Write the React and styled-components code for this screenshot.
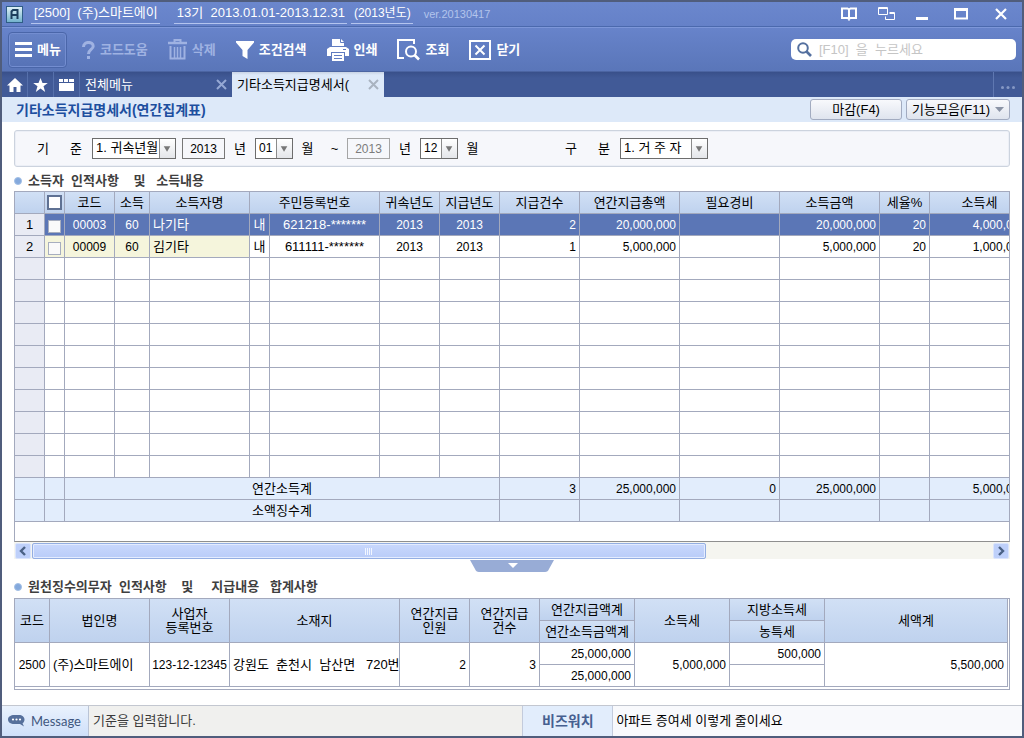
import React from "react";
import styled, { createGlobalStyle, css } from "styled-components";

const LINE = "#a3a9bd";
const HEAD_BG = "linear-gradient(#d1e0f5, #bfd2ee)";

const GlobalStyle = createGlobalStyle`
  *, *::before, *::after { box-sizing: border-box; }
  body { margin: 0; }
  body, button, input, select {
    font-family: "Liberation Sans", "Noto Sans CJK KR", sans-serif;
    font-size: 13px;
    line-height: 16px;
    color: #000;
  }
  button, input, select { margin: 0; padding: 0; border: 0; border-radius: 0; background: none; }
  button { cursor: pointer; }
`;

const Frame = styled.div`
  display: flex;
  flex-direction: column;
  min-height: 100vh;
  border: 2px solid #505d7c;
  background: #fff;
`;

const TitleBar = styled.header`
  display: flex;
  align-items: center;
  height: 25px;
  padding: 0 13px 0 4px;
  color: #fff;
  background: linear-gradient(#6b87cd, #6581c8);
  border-bottom: 1px solid #4b69ad;
  white-space: pre;
`;

const Underlined = styled.span`
  height: 20px;
  padding: 1px 2px 0 3px;
  margin-left: ${(p) => p.$gap}px;
  border-bottom: 1px solid #b4c4ee;
  font-size: ${(p) => (p.$small ? 12 : 13)}px;
`;

const Version = styled.span`
  margin-left: 11px;
  font-size: 11px;
  color: #b3c4ec;
`;

const WindowButtons = styled.div`
  display: flex;
  gap: 21px;
  margin-left: auto;
  button { display: flex; }
`;

const Toolbar = styled.div`
  display: flex;
  align-items: center;
  height: 45px;
  padding: 0 6px;
  background: linear-gradient(#6783ca, #5a76b9);
  border-top: 1px solid #7d97d9;
  border-bottom: 1px solid #4c65a2;
`;

const MenuButton = styled.button`
  display: flex;
  align-items: center;
  gap: 5px;
  height: 36px;
  padding: 0 5px 0 6px;
  color: #fff;
  font-weight: 700;
  border: 1px solid #4a66a9;
  border-radius: 4px;
  background: linear-gradient(#6682c6, #5672b6);
  box-shadow: inset 0 0 0 1px #738dd0;
`;

const Tools = styled.nav`
  display: flex;
  gap: 20px;
  margin-left: 15px;
`;

const ToolButton = styled.button`
  display: flex;
  align-items: center;
  gap: 5px;
  height: 30px;
  font-weight: 700;
  white-space: nowrap;
  color: ${(p) => (p.$muted ? "#9fb2e2" : "#fff")};
`;

const SearchBox = styled.label`
  display: flex;
  align-items: center;
  gap: 7px;
  width: 225px;
  height: 21px;
  margin-left: auto;
  padding: 0 6px;
  border-radius: 5px;
  background: #fff;
  input { flex: 1; min-width: 0; outline: 0; }
  input::placeholder { color: #c5c5c5; opacity: 1; }
`;

const TabBar = styled.div`
  display: flex;
  height: 25px;
  background: linear-gradient(#39508a, #415a97 6px);
`;

const TabIcon = styled.button`
  display: flex;
  align-items: center;
  justify-content: center;
  width: 26px;
  border-right: 1px solid #5670ab;
`;

const Tab = styled.div`
  display: flex;
  align-items: center;
  justify-content: space-between;
  width: 152px;
  padding: 0 5px;
  white-space: nowrap;
  color: ${(p) => (p.$active ? "#000" : "#fff")};
  background: ${(p) => (p.$active ? "linear-gradient(#c8d3e4, #dde9f9 3px)" : "none")};
  button { display: flex; color: ${(p) => (p.$active ? "#a9b3c0" : "#95a8d4")}; }
`;

const TabText = styled.button`
  && { color: inherit; }
`;

const MoreButton = styled.button`
  display: flex;
  align-items: center;
  justify-content: center;
  width: 29px;
  margin-left: auto;
  padding-top: 5px;
  border-left: 1px solid #5f78b1;
`;

const PageHead = styled.div`
  display: flex;
  align-items: center;
  gap: 4px;
  height: 25px;
  padding: 0 12px 0 14px;
  background: #dde9f9;
`;

const PageTitle = styled.h1`
  margin: 0 auto 0 0;
  font-size: 14px;
  line-height: 20px;
  color: #1d4f9f;
`;

const HeadButton = styled.button`
  display: flex;
  align-items: center;
  justify-content: center;
  gap: 5px;
  min-width: 92px;
  height: 21px;
  padding: 0 5px;
  border: 1px solid #a2abc0;
  border-radius: 3px;
  background: linear-gradient(#f8f9fc, #dfe4ee);
`;

const Main = styled.main`
  padding: 8px 12px 15px;
`;

const Filter = styled.form`
  display: flex;
  align-items: center;
  height: 37px;
  padding-left: 22px;
  border: 1px solid #ccd3de;
  border-radius: 3px;
  background: #f6f7fb;
  box-shadow: inset 0 0 0 1px #eceff6;
`;

const Caption = styled.label`
  display: flex;
  justify-content: space-between;
  width: 45px;
  margin-right: 10px;
  margin-left: ${(p) => p.$gap || 0}px;
`;

const Unit = styled.span`
  width: ${(p) => p.$w}px;
  text-align: center;
`;

const YearInput = styled.input`
  width: 43px;
  height: 21px;
  text-align: center;
  font-size: 12px;
  border: 1px solid #777;
  background: #f6f7fb;
  &:disabled { color: #7c7c7c; border-color: #a5a5a5; }
`;

const SelectBox = styled.span`
  position: relative;
  width: ${(p) => p.$w}px;
  height: 21px;
  border: 1px solid #6d6d6d;
  background: #fff;
  select {
    appearance: none;
    width: 100%;
    height: 19px;
    padding: 0 16px 2px 3px;
    font-size: ${(p) => (p.$small ? 12 : 13)}px;
    outline: 0;
  }
  svg {
    position: absolute;
    top: 0;
    right: 0;
    width: 16px;
    height: 19px;
    border-left: 1px solid #8b8b8b;
    background: linear-gradient(#fff, #e4e6ea);
    pointer-events: none;
  }
`;

const SectionTitle = styled.h2`
  display: flex;
  align-items: center;
  gap: 6px;
  height: ${(p) => p.$h}px;
  margin: 0;
  padding-top: 4px;
  font-size: 13px;
  line-height: 16px;
  color: #3f3f3f;
  white-space: pre;
  &::before {
    content: "";
    width: 8px;
    height: 8px;
    border-radius: 50%;
    background: #84a9dc;
    border: 1px solid #a3c0e6;
  }
`;

const GridBox = styled.div`
  overflow: hidden;
  padding-bottom: 19px;
  border: 1px solid ${LINE};
  border-bottom-color: #8f8f8f;
`;

const tableBase = css`
  table-layout: fixed;
  border-collapse: separate;
  border-spacing: 0;
  th, td {
    height: 22px;
    padding: 0 3px;
    border: 0 solid ${LINE};
    border-width: 0 1px 1px 0;
    font-weight: 400;
    line-height: 14px;
    white-space: pre;
    overflow: hidden;
  }
  thead th { padding: 0; background: ${HEAD_BG}; }
`;

const Grid = styled.table`
  ${tableBase}
  width: 1015px;
  tbody th { background: #e9ebf4; }
  tfoot td { background: #e2edfc; }
`;

const Row = styled.tr`
  td { color: ${(p) => (p.$selected ? "#fff" : "#000")}; background: ${(p) => (p.$selected ? "#5b76b6" : "#fff")}; }
  td:nth-child(-n + 5) { ${(p) => p.$tinted && "background: #f5f5dc;"} }
`;

const Cell = styled.td`
  text-align: ${(p) => p.$align || "left"};
  font-size: ${(p) => (p.$num ? 12 : 13)}px;
  && { ${(p) => p.$tight && "padding: 0;"} }
`;

const Check = styled.input`
  appearance: none;
  display: block;
  width: ${(p) => (p.$head ? 15 : 13)}px;
  height: ${(p) => (p.$head ? 15 : 13)}px;
  margin: ${(p) => (p.$head ? "0 auto" : "3px auto 0")};
  border: ${(p) => (p.$head ? "2px solid #5f7193" : "1px solid #a7aebf")};
  background: ${(p) => (p.$head ? "#fff" : "#fafafa")};
`;

const ScrollBar = styled.div`
  display: flex;
  gap: 1px;
  height: 17px;
  padding: 1px 1px 0;
  background: #f5f5f0;
`;

const ScrollArrow = styled.button`
  display: flex;
  align-items: center;
  justify-content: center;
  width: 16px;
  border: 1px solid #dbe5fd;
  border-radius: 2px;
  background: #bed0fa;
`;

const ScrollThumb = styled.div`
  display: flex;
  align-items: center;
  justify-content: center;
  flex: 674;
  border: 1px solid #94aee2;
  border-radius: 2px;
  background: linear-gradient(#c9d8fd, #b9ccf8);
  box-shadow: inset 0 0 0 1px #e4ecff;
`;

const ScrollRest = styled.div`
  flex: 286;
`;

const Fold = styled.button`
  display: block;
  height: 12px;
  margin: 1px auto 0;
  svg { display: block; }
`;

const SummaryBox = styled.div`
  padding: 0 1px 2px 0;
  border: 1px solid ${LINE};
`;

const Summary = styled.table`
  ${tableBase}
  width: 100%;
`;

const Status = styled.footer`
  display: flex;
  height: 31px;
  margin-top: auto;
  line-height: 30px;
  white-space: nowrap;
  border-top: 1px solid #c3c7d0;
`;

const StatusTag = styled.div`
  display: flex;
  align-items: center;
  gap: 6px;
  width: 87px;
  padding-left: 6px;
  font-family: Lato, sans-serif;
  font-size: 13px;
  color: #40577f;
  background: linear-gradient(#eaf2fd, #cfe0fa);
  border-right: 1px solid #bac4d6;
`;

const StatusText = styled.div`
  flex: 434;
  padding-left: 4px;
  color: #3a3a3a;
  background: #f0f0ee;
`;

const BizTag = styled.div`
  width: 91px;
  text-align: center;
  font-size: 14px;
  font-weight: 700;
  color: #465f90;
  background: #e2edfc;
  border: 0 solid #c3cbdc;
  border-width: 0 1px;
`;

const BizText = styled.a`
  flex: 410;
  padding-left: 3px;
  color: #000;
  text-decoration: none;
  background: #f8f9fc;
`;

const Close = () => (
  <svg width="11" height="11" viewBox="0 0 11 11" fill="none" stroke="currentColor" strokeWidth="2">
    <path d="M1 1l9 9M10 1l-9 9" />
  </svg>
);

const Select = ({ id, label, w, options, small }) => (
  <SelectBox $w={w} $small={small}>
    <select id={id} aria-label={label}>
      {options.map((o) => <option key={o}>{o}</option>)}
    </select>
    <svg viewBox="0 0 16 19"><path d="M4 7h7l-3.5 6z" fill="#777" /></svg>
  </SelectBox>
);

const GRID_COLS = [30, 20, 50, 35, 100, 20, 110, 60, 60, 80, 100, 100, 100, 50, 100];
const ROWS = [
  { code: "00003", name: "나기타", id: "621218-*******", count: "2", total: "20,000,000", income: "20,000,000", tax: "4,000,000", selected: true },
  { code: "00009", name: "김기타", id: "611111-*******", count: "1", total: "5,000,000", income: "5,000,000", tax: "1,000,000" },
];
const EMPTY_ROWS = 10;
const SUMMARY_COLS = [35, 100, 80, 170, 70, 70, 95, 95, 95];

export default function App() {
  return (
    <Frame>
      <GlobalStyle />
      <TitleBar>
        <svg width="17" height="17" viewBox="0 0 17 17">
          <defs>
            <linearGradient id="logo" x2="0" y2="1"><stop stopColor="#e2f3f8" /><stop offset="1" stopColor="#6fb0cb" /></linearGradient>
          </defs>
          <rect x=".5" y=".5" width="16" height="16" fill="url(#logo)" stroke="#2f5d86" />
          <path d="M5.500 13V5.500L7 4h4.500v9M5.500 9h6" fill="none" stroke="#1c3d5c" strokeWidth="2" />
        </svg>
        <Underlined $gap={8}>{"[2500]  (주)스마트에이"}</Underlined>
        <Underlined $gap={14}>{"13기  2013.01.01-2013.12.31"}</Underlined>
        <Underlined $gap={4} $small>(2013년도)</Underlined>
        <Version>ver.20130417</Version>
        <WindowButtons>
          <button aria-label="도움말">
            <svg width="17" height="14" fill="none" stroke="#fff" strokeWidth="2"><path d="M9 2.500L7.500 1.500H2v9.500h5.500L9 12l1.500-1H16V1.500h-5.500zV13.500" /></svg>
          </button>
          <button aria-label="창 전환">
            <svg width="17" height="14" fill="none" stroke="#fff"><path d="M.5 .5h9v7h-9zM.5 1.500h9M11.500 5.500h5v7h-9V9.500M11.500 6.500h5" /></svg>
          </button>
          <button aria-label="최소화">
            <svg width="17" height="14"><path d="M0 10h12v3H0z" fill="#fff" /></svg>
          </button>
          <button aria-label="최대화">
            <svg width="17" height="14" fill="none" stroke="#fff"><path d="M1 2v9.500h12V2z" strokeWidth="2" /><path d="M0 2.500h14" strokeWidth="3" /></svg>
          </button>
          <button aria-label="창 닫기">
            <svg width="17" height="14" stroke="#fff" strokeWidth="2.200"><path d="M4 2l10 10M14 2L4 12" /></svg>
          </button>
        </WindowButtons>
      </TitleBar>

      <Toolbar>
        <MenuButton>
          <svg width="17" height="15" fill="#fff"><path d="M0 0h17v3H0zM0 6h17v3H0zM0 12h17v3H0z" /></svg>
          메뉴
        </MenuButton>
        <Tools>
          <ToolButton $muted>
            <svg width="13" height="18" viewBox="0 0 13 18" fill="none" stroke="currentColor" strokeWidth="3">
              <path d="M1.500 6C1.500 0 11.200 0 11.200 5.200c0 3.300-4.700 3.300-4.700 7.800" /><path d="M6.500 15v3" />
            </svg>
            코드도움
          </ToolButton>
          <ToolButton $muted>
            <svg width="19" height="21" viewBox="0 0 19 21" fill="none" stroke="currentColor">
              <path d="M0 4h19" strokeWidth="2.500" /><path d="M6.500 3V1h6v2M2.500 7v12.500h14V7" strokeWidth="2" />
              <path d="M6.500 8v11M9.500 8v11M12.500 8v11" strokeWidth="1.500" />
            </svg>
            삭제
          </ToolButton>
          <ToolButton>
            <svg width="18" height="18" fill="#fff"><path d="M0 0h18v1.500L11.500 9v9L6.500 15V9L0 1.500z" /></svg>
            조건검색
          </ToolButton>
          <ToolButton>
            <svg width="22" height="22" fill="#fff">
              <path d="M5 0h9l3 3v4H5z" /><path d="M3 8h16l3 2v7h-4v-4H4v4H0v-7z" /><path d="M5 14h12v8H5z" />
              <path d="M7 16.500h8M7 19.500h8" stroke="#617dc2" /><path d="M13.500 0v3.500H17M16 10.500h3" fill="none" stroke="#617dc2" />
            </svg>
            인쇄
          </ToolButton>
          <ToolButton>
            <svg width="23" height="22" fill="none" stroke="#fff">
              <path d="M17 5V1H1v18h6" strokeWidth="2" /><circle cx="14" cy="12.500" r="5" strokeWidth="2" /><path d="M17.500 16l4.500 4.500" strokeWidth="2.600" />
            </svg>
            조회
          </ToolButton>
          <ToolButton>
            <svg width="22" height="20" fill="none" stroke="#fff" strokeWidth="2"><path d="M1 1h20v18H1zM6.500 5.500l9 9M15.500 5.500l-9 9" /></svg>
            닫기
          </ToolButton>
        </Tools>
        <SearchBox>
          <svg width="15" height="15" fill="none" stroke="#54709f"><circle cx="6" cy="6" r="4.800" strokeWidth="2" /><path d="M9.500 9.500l4.500 4.500" strokeWidth="2.600" /></svg>
          <input type="text" aria-label="검색" placeholder="[F10]  을  누르세요" />
        </SearchBox>
      </Toolbar>

      <TabBar>
        <TabIcon aria-label="홈"><svg width="16" height="14" fill="#fff"><path d="M8 0l8 7.500h-2.500V14H9.500V9h-3v5H2.500V7.500H0z" /></svg></TabIcon>
        <TabIcon aria-label="즐겨찾기"><svg width="15" height="14" fill="#fff"><path d="M7.500 0l2 5h5.300l-4.300 3.300L12.200 14l-4.700-3.400L2.800 14l1.700-5.700L.2 5h5.300z" /></svg></TabIcon>
        <TabIcon aria-label="보관함"><svg width="15" height="13" fill="#fff"><path d="M0 1h4v3H0zM5 1h4v3H5zM10 1h5v3h-5zM0 5h15v8H0z" /></svg></TabIcon>
        <Tab>
          <TabText>전체메뉴</TabText>
          <button aria-label="전체메뉴 탭 닫기"><Close /></button>
        </Tab>
        <Tab $active>
          <TabText>기타소득지급명세서(</TabText>
          <button aria-label="현재 탭 닫기"><Close /></button>
        </Tab>
        <MoreButton aria-label="더보기">
          <svg width="14" height="3" fill="#8598c4"><circle cx="1.500" cy="1.500" r="1.500" /><circle cx="7" cy="1.500" r="1.500" /><circle cx="12.500" cy="1.500" r="1.500" /></svg>
        </MoreButton>
      </TabBar>

      <PageHead>
        <PageTitle>기타소득지급명세서(연간집계표)</PageTitle>
        <HeadButton>마감(F4)</HeadButton>
        <HeadButton>
          기능모음(F11)
          <svg width="9" height="5" fill="#8a93a5"><path d="M0 0h9L4.500 5z" /></svg>
        </HeadButton>
      </PageHead>

      <Main>
        <Filter>
          <Caption htmlFor="basis"><span>기</span><span>준</span></Caption>
          <Select id="basis" w={84} options={["1. 귀속년월"]} />
          <Unit $w={6} />
          <YearInput type="text" aria-label="시작 년도" defaultValue="2013" />
          <Unit $w={30}>년</Unit>
          <Select label="시작 월" w={38} options={["01"]} small />
          <Unit $w={29}>월</Unit>
          <Unit $w={25}>~</Unit>
          <YearInput type="text" aria-label="종료 년도" defaultValue="2013" disabled />
          <Unit $w={30}>년</Unit>
          <Select label="종료 월" w={38} options={["12"]} small />
          <Unit $w={29}>월</Unit>
          <Caption htmlFor="kind" $gap={78}><span>구</span><span>분</span></Caption>
          <Select id="kind" w={88} options={["1. 거 주 자"]} />
        </Filter>

        <SectionTitle $h={24}>{"소득자  인적사항    및   소득내용"}</SectionTitle>
        <GridBox>
          <Grid>
            <colgroup>{GRID_COLS.map((w, i) => <col key={i} style={{ width: w }} />)}</colgroup>
            <thead>
              <tr>
                <th />
                <th><Check type="checkbox" $head aria-label="전체 선택" /></th>
                <th>코드</th><th>소득</th><th>소득자명</th>
                <th colSpan={2}>주민등록번호</th>
                <th>귀속년도</th><th>지급년도</th><th>지급건수</th><th>연간지급총액</th>
                <th>필요경비</th><th>소득금액</th><th>세율%</th><th>소득세</th>
              </tr>
            </thead>
            <tbody>
              {ROWS.map((r, i) => (
                <Row key={r.code} $selected={r.selected} $tinted={!r.selected}>
                  <th>{i + 1}</th>
                  <Cell $tight><Check type="checkbox" aria-label={`${r.name} 선택`} /></Cell>
                  <Cell $align="center" $num>{r.code}</Cell>
                  <Cell $align="center" $num>60</Cell>
                  <Cell>{r.name}</Cell>
                  <Cell $align="center" $tight>내</Cell>
                  <Cell $align="center">{r.id}</Cell>
                  <Cell $align="center" $num>2013</Cell>
                  <Cell $align="center" $num>2013</Cell>
                  <Cell $align="right" $num>{r.count}</Cell>
                  <Cell $align="right" $num>{r.total}</Cell>
                  <Cell />
                  <Cell $align="right" $num>{r.income}</Cell>
                  <Cell $align="right" $num>20</Cell>
                  <Cell $align="right" $num>{r.tax}</Cell>
                </Row>
              ))}
              {Array.from({ length: EMPTY_ROWS }, (_, i) => (
                <Row key={i}>
                  <th />
                  {GRID_COLS.slice(1).map((_, j) => <Cell key={j} />)}
                </Row>
              ))}
            </tbody>
            <tfoot>
              <tr>
                <Cell /><Cell />
                <Cell colSpan={7} $align="center">연간소득계</Cell>
                <Cell $align="right" $num>3</Cell>
                <Cell $align="right" $num>25,000,000</Cell>
                <Cell $align="right" $num>0</Cell>
                <Cell $align="right" $num>25,000,000</Cell>
                <Cell />
                <Cell $align="right" $num>5,000,000</Cell>
              </tr>
              <tr>
                <Cell /><Cell />
                <Cell colSpan={7} $align="center">소액징수계</Cell>
                <Cell /><Cell /><Cell /><Cell /><Cell /><Cell />
              </tr>
            </tfoot>
          </Grid>
        </GridBox>
        <ScrollBar>
          <ScrollArrow type="button" aria-label="왼쪽으로"><svg width="8" height="10" fill="none" stroke="#4a6185" strokeWidth="2.400"><path d="M6 1L2 5l4 4" /></svg></ScrollArrow>
          <ScrollThumb><svg width="8" height="7" stroke="#f2f6ff"><path d="M.5 0v7M2.500 0v7M4.500 0v7M6.500 0v7" /></svg></ScrollThumb>
          <ScrollRest />
          <ScrollArrow type="button" aria-label="오른쪽으로"><svg width="8" height="10" fill="none" stroke="#4a6185" strokeWidth="2.400"><path d="M2 1l4 4-4 4" /></svg></ScrollArrow>
        </ScrollBar>
        <Fold type="button" aria-label="접기">
          <svg width="84" height="12"><path d="M0 0h84l-5 9q-1 3-4 3H9q-3 0-4-3z" fill="#98acd6" /><path d="M38 3h10l-5 5z" fill="#fff" /></svg>
        </Fold>

        <SectionTitle $h={26}>{"원천징수의무자  인적사항    및     지급내용   합계사항"}</SectionTitle>
        <SummaryBox>
          <Summary>
            <colgroup>
              {SUMMARY_COLS.map((w, i) => <col key={i} style={{ width: w }} />)}
              <col />
            </colgroup>
            <thead>
              <tr>
                <th rowSpan={2}>코드</th>
                <th rowSpan={2}>법인명</th>
                <th rowSpan={2}>사업자<br />등록번호</th>
                <th rowSpan={2}>소재지</th>
                <th rowSpan={2}>연간지급<br />인원</th>
                <th rowSpan={2}>연간지급<br />건수</th>
                <th>연간지급액계</th>
                <th rowSpan={2}>소득세</th>
                <th>지방소득세</th>
                <th rowSpan={2}>세액계</th>
              </tr>
              <tr><th>연간소득금액계</th><th>농특세</th></tr>
            </thead>
            <tbody>
              <tr>
                <Cell rowSpan={2} $num $align="center">2500</Cell>
                <Cell rowSpan={2}>(주)스마트에이</Cell>
                <Cell rowSpan={2} $num $align="center" $tight>123-12-12345</Cell>
                <Cell rowSpan={2}>{"강원도  춘천시  남산면   720번"}</Cell>
                <Cell rowSpan={2} $num $align="right">2</Cell>
                <Cell rowSpan={2} $num $align="right">3</Cell>
                <Cell $num $align="right">25,000,000</Cell>
                <Cell rowSpan={2} $num $align="right">5,000,000</Cell>
                <Cell $num $align="right">500,000</Cell>
                <Cell rowSpan={2} $num $align="right">5,500,000</Cell>
              </tr>
              <tr><Cell $num $align="right">25,000,000</Cell><Cell /></tr>
            </tbody>
          </Summary>
        </SummaryBox>
      </Main>

      <Status>
        <StatusTag>
          <svg width="17" height="13" viewBox="0 0 17 13">
            <path d="M6 0h5c3 0 5.500 2 5.500 4.500 0 2-.8 3-2 3.800l1.500 3.200-4-2.500H6C3 9 0 7.500 0 4.500S3 0 6 0z" fill="#56709c" />
            <circle cx="5" cy="4.500" r="1.100" fill="#fff" /><circle cx="8.500" cy="4.500" r="1.100" fill="#fff" /><circle cx="12" cy="4.500" r="1.100" fill="#fff" />
          </svg>
          Message
        </StatusTag>
        <StatusText>기준을 입력합니다.</StatusText>
        <BizTag>비즈워치</BizTag>
        <BizText href="#">아파트 증여세 이렇게 줄이세요</BizText>
      </Status>
    </Frame>
  );
}
